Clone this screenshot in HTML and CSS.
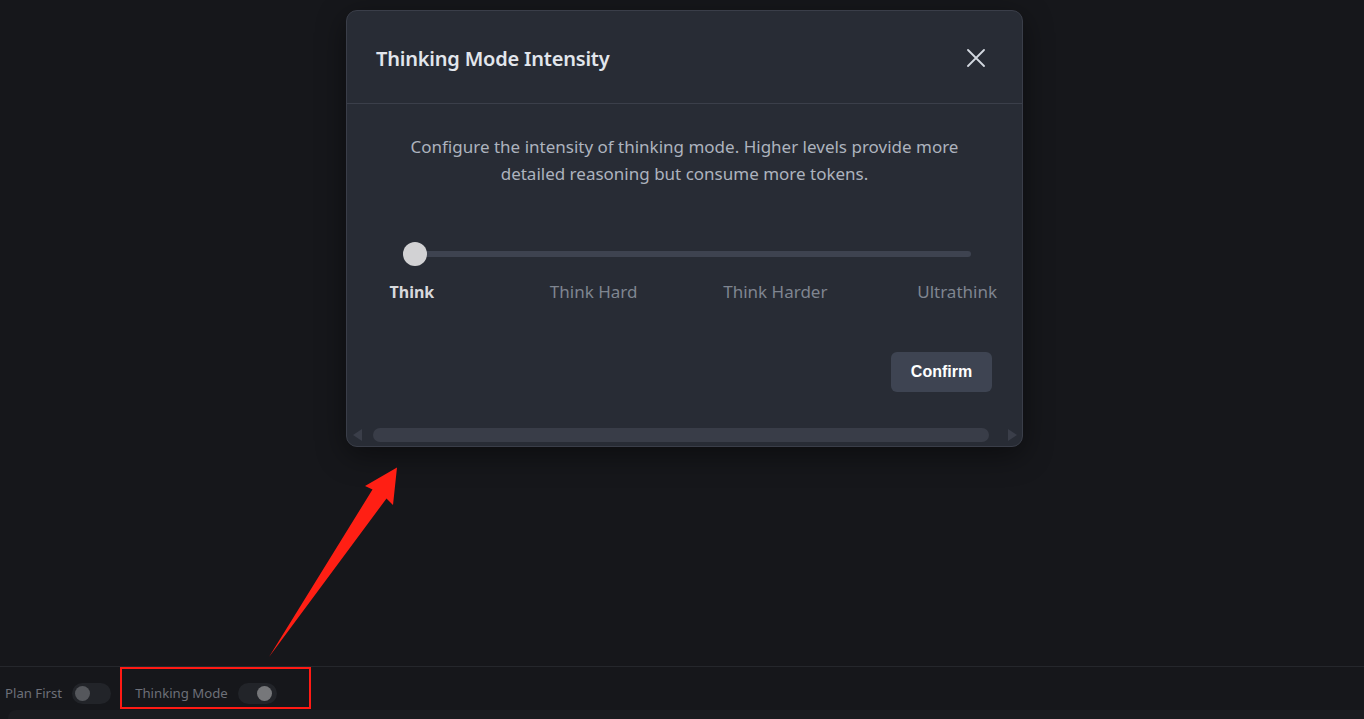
FILE: index.html
```html
<!DOCTYPE html>
<html lang="en">
<head>
<meta charset="utf-8">
<title>Thinking Mode Intensity</title>
<link rel="stylesheet" href="styles.css">
</head>
<body>
<div class="page">
  <main class="stage">
    <section class="modal">
      <header class="modal-header">
        <h2 class="modal-title">Thinking Mode Intensity</h2>
        <button class="close-btn" aria-label="Close">
          <svg width="18" height="18" viewBox="0 0 18 18"><path d="M1 1 L17 17 M17 1 L1 17" stroke="#d3d8e0" stroke-width="1.8" stroke-linecap="round"/></svg>
        </button>
      </header>
      <div class="modal-body">
        <p class="desc">Configure the intensity of thinking mode. Higher levels provide more detailed reasoning but consume more tokens.</p>
        <div class="slider">
          <div class="track"></div>
          <div class="thumb"></div>
        </div>
        <div class="labels">
          <span class="label active">Think</span>
          <span class="label">Think Hard</span>
          <span class="label">Think Harder</span>
          <span class="label">Ultrathink</span>
        </div>
        <div class="actions">
          <button class="confirm">Confirm</button>
        </div>
      </div>
      <div class="hscroll">
        <span class="arrow left"></span>
        <span class="hthumb"></span>
        <span class="arrow right"></span>
      </div>
    </section>
  </main>
  <footer class="bottom-bar">
    <div class="toggle-item">
      <span class="toggle-label">Plan First</span>
      <span class="toggle"><span class="knob"></span></span>
    </div>
    <div class="toggle-item">
      <span class="toggle-label">Thinking Mode</span>
      <span class="toggle on"><span class="knob"></span></span>
    </div>
  </footer>
  <div class="input-box"></div>

  <div class="highlight"></div>
  <svg class="annot" width="1364" height="719" viewBox="0 0 1364 719">
    <polygon points="269,657 372.5,489.5 365,486 397,467.5 393,505 386.5,498.5" fill="#ff1f14"/>
  </svg>
</div>
</body>
</html>
```

FILE: styles.css
```css
* { box-sizing: border-box; }
html, body { margin: 0; padding: 0; }
body {
  background: #16171b;
  font-family: "Noto Sans", Roboto, sans-serif;
  width: 1364px;
  height: 719px;
  overflow: hidden;
}
.page { position: relative; width: 1364px; height: 719px; }

.stage {
  height: 666px;
  padding-top: 10px;
  padding-left: 346px;
}

.modal {
  width: 677px;
  background: #282c35;
  border: 1px solid #3a3e49;
  border-radius: 11px;
  box-shadow: 0 8px 30px rgba(0,0,0,0.45);
  overflow: hidden;
}

.modal-header {
  height: 93px;
  border-bottom: 1px solid #3b3f4a;
  display: flex;
  align-items: center;
  justify-content: space-between;
  padding: 2px 37px 0 29px;
}
.modal-title {
  margin: 0;
  font-size: 20px;
  font-weight: 600;
  color: #e2e6ec;
  letter-spacing: -0.2px;
}
.close-btn {
  background: none;
  border: 0;
  padding: 0;
  width: 18px;
  height: 18px;
  display: flex;
}

.modal-body {
  display: flex;
  flex-direction: column;
  padding-top: 29px;
}
.desc {
  margin: 0 auto;
  width: 580px;
  text-align: center;
  font-size: 17px;
  line-height: 27px;
  color: #adb3be;
}

.slider {
  position: relative;
  margin-top: 55px;
  margin-left: 56px;
  width: 568px;
  height: 24px;
}
.track {
  position: absolute;
  left: 0;
  right: 0;
  top: 9px;
  height: 6px;
  border-radius: 3px;
  background: #3e4350;
}
.thumb {
  position: absolute;
  left: 0;
  top: 0;
  width: 24px;
  height: 24px;
  border-radius: 50%;
  background: #d2d2d4;
}

.labels {
  margin: 14px -26px 0 -26px;
  display: grid;
  grid-template-columns: repeat(4, 1fr);
}
.label {
  text-align: center;
  font-size: 17px;
  line-height: 24px;
  color: #7f8590;
}
.label.active {
  color: #d8d9dc;
  font-size: 16px;
  font-weight: 700;
}

.actions {
  display: flex;
  justify-content: flex-end;
  padding-right: 30px;
  margin-top: 48px;
}
.confirm {
  width: 101px;
  height: 40px;
  border: 0;
  border-radius: 6px;
  background: #3e4452;
  color: #ffffff;
  font-family: "Liberation Sans", Arial, sans-serif;
  font-size: 16px;
  font-weight: 600;
}

.hscroll {
  margin-top: 36px;
  margin-bottom: 4px;
  height: 14px;
  display: flex;
  align-items: center;
  padding: 0 5px 0 6px;
}
.arrow {
  width: 0;
  height: 0;
  border-top: 6px solid transparent;
  border-bottom: 6px solid transparent;
}
.arrow.left { border-right: 9px solid #3a3e49; }
.arrow.right { border-left: 9px solid #3a3e49; }
.hthumb {
  flex: 1;
  height: 14px;
  margin: 0 19px 0 11px;
  border-radius: 7px;
  background: #393d48;
}

.bottom-bar {
  height: 44px;
  border-top: 1px solid #25272c;
  display: flex;
  align-items: center;
  gap: 24px;
  padding-left: 5px;
  padding-top: 17px;
  padding-bottom: 8px;
  font-family: "Noto Sans", "Open Sans", sans-serif;
}
.toggle-item {
  display: flex;
  align-items: center;
  gap: 10px;
}
.toggle-label {
  font-size: 13.2px;
  color: #6d7079;
}
.toggle {
  position: relative;
  width: 39px;
  height: 21px;
  border-radius: 11px;
  background: #222429;
}
.knob {
  position: absolute;
  top: 3px;
  left: 3px;
  width: 15px;
  height: 15px;
  border-radius: 50%;
  background: #55575c;
}
.toggle.on .knob {
  left: auto;
  right: 5px;
  background: #76777a;
}

.input-box {
  margin-left: 8px;
  height: 20px;
  background: #1b1c20;
  border-radius: 8px 0 0 0;
}

.highlight {
  position: absolute;
  left: 120px;
  top: 667px;
  width: 191px;
  height: 42px;
  border: 2px solid #ff1a14;
}
.annot {
  position: absolute;
  left: 0;
  top: 0;
  pointer-events: none;
}
```
